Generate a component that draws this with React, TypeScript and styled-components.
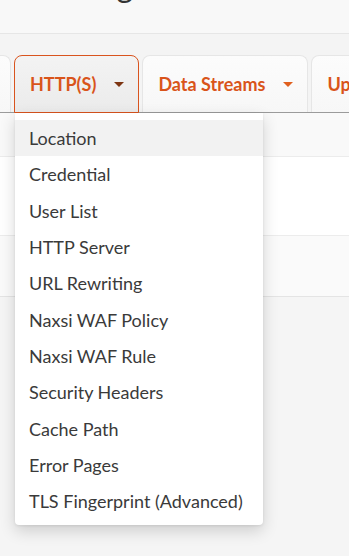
import styled, { createGlobalStyle } from 'styled-components'

const GlobalStyle = createGlobalStyle`
  html, body {
    margin: 0;
    padding: 0;
    background: #f4f4f4;
    font-family: Lato, "Liberation Sans", sans-serif;
  }
`

const menuItems = [
  'Location',
  'Credential',
  'User List',
  'HTTP Server',
  'URL Rewriting',
  'Naxsi WAF Policy',
  'Naxsi WAF Rule',
  'Security Headers',
  'Cache Path',
  'Error Pages',
  'TLS Fingerprint (Advanced)',
]

const Caret = ({ dark }: { dark?: boolean }) => (
  <CaretIcon viewBox="0 0 10 5" width="10" height="5" $dark={dark}>
    <path d="M0 0h10L5 5z" />
  </CaretIcon>
)

export default function App() {
  return (
    <Page>
      <GlobalStyle />
      <Header>
        <Title>Routing</Title>
      </Header>
      <TabBar>
        <TabRow>
          <Tab $width={120} />
          <TabHolder>
            <Tab $active>
              HTTP(S)
              <Caret dark />
            </Tab>
            <Menu>
              {menuItems.map((item, i) => (
                <MenuItem key={item} $hover={i === 0}>
                  {item}
                </MenuItem>
              ))}
            </Menu>
          </TabHolder>
          <Tab>
            Data Streams
            <Caret />
          </Tab>
          <Tab>Upstreams</Tab>
        </TabRow>
      </TabBar>
      <Row $height={43} $bg="#f9f9f9" />
      <Row $height={78} $bg="#ffffff" />
      <Row $height={60} $bg="#fafafa" $line="#e4e4e4" />
    </Page>
  )
}

const Page = styled.div`
  width: 349px;
  height: 556px;
  overflow: hidden;
  background: #f5f5f5;
`

const Header = styled.div`
  height: 33px;
  overflow: hidden;
  background: #f8f8f8;
  border-bottom: 1px solid #e6e6e6;
`

const Title = styled.h1`
  margin: -31px 0 0;
  padding-left: 24px;
  font-size: 32px;
  line-height: 32px;
  font-weight: 400;
  color: #333;
`

const TabBar = styled.div`
  height: 79px;
  padding-top: 21px;
  box-sizing: border-box;
  background: #f4f4f4;
  border-bottom: 1px solid #9b9b9b;
`

const TabRow = styled.div`
  display: flex;
  gap: 3px;
  height: 100%;
  margin-left: -109px;
`

const TabHolder = styled.div`
  position: relative;
  display: flex;
  align-items: flex-start;
`

const Tab = styled.div<{ $active?: boolean; $width?: number }>`
  display: flex;
  align-items: center;
  gap: 18px;
  flex-shrink: 0;
  box-sizing: border-box;
  ${(p) => (p.$width ? `width: ${p.$width}px;` : '')}
  height: ${(p) => (p.$active ? 'calc(100% + 1px)' : '100%')};
  padding: 0 14px 0 15px;
  border: 1px solid ${(p) => (p.$active ? '#d9541e' : '#e6e6e6')};
  border-bottom: ${(p) => (p.$active ? '1px solid #d9541e' : 'none')};
  border-radius: 8px 8px 0 0;
  background: ${(p) =>
    p.$active ? 'linear-gradient(#f3f3f3, #ebebeb)' : 'linear-gradient(#fcfcfc, #f7f7f7)'};
  color: #d9541a;
  font-size: 18px;
  font-weight: 700;
  white-space: nowrap;
`

const CaretIcon = styled.svg<{ $dark?: boolean }>`
  fill: ${(p) => (p.$dark ? '#7d3512' : '#e0601f')};
`

const Menu = styled.div`
  position: absolute;
  top: calc(100% + 1px);
  left: 1px;
  width: 248px;
  padding: 7px 0 6px;
  background: #fff;
  border-radius: 0 0 4px 4px;
  box-shadow: 0 6px 16px rgba(0, 0, 0, 0.16), 0 1px 3px rgba(0, 0, 0, 0.08);
  z-index: 10;
`

const MenuItem = styled.div<{ $hover?: boolean }>`
  display: flex;
  align-items: center;
  height: 36.3px;
  padding-left: 14px;
  background: ${(p) => (p.$hover ? '#f2f2f2' : 'transparent')};
  color: #3a3a3a;
  font-size: 18px;
  white-space: nowrap;
`

const Row = styled.div<{ $height: number; $bg: string; $line?: string }>`
  height: ${(p) => p.$height}px;
  background: ${(p) => p.$bg};
  border-bottom: 1px solid ${(p) => p.$line ?? '#ececec'};
`
